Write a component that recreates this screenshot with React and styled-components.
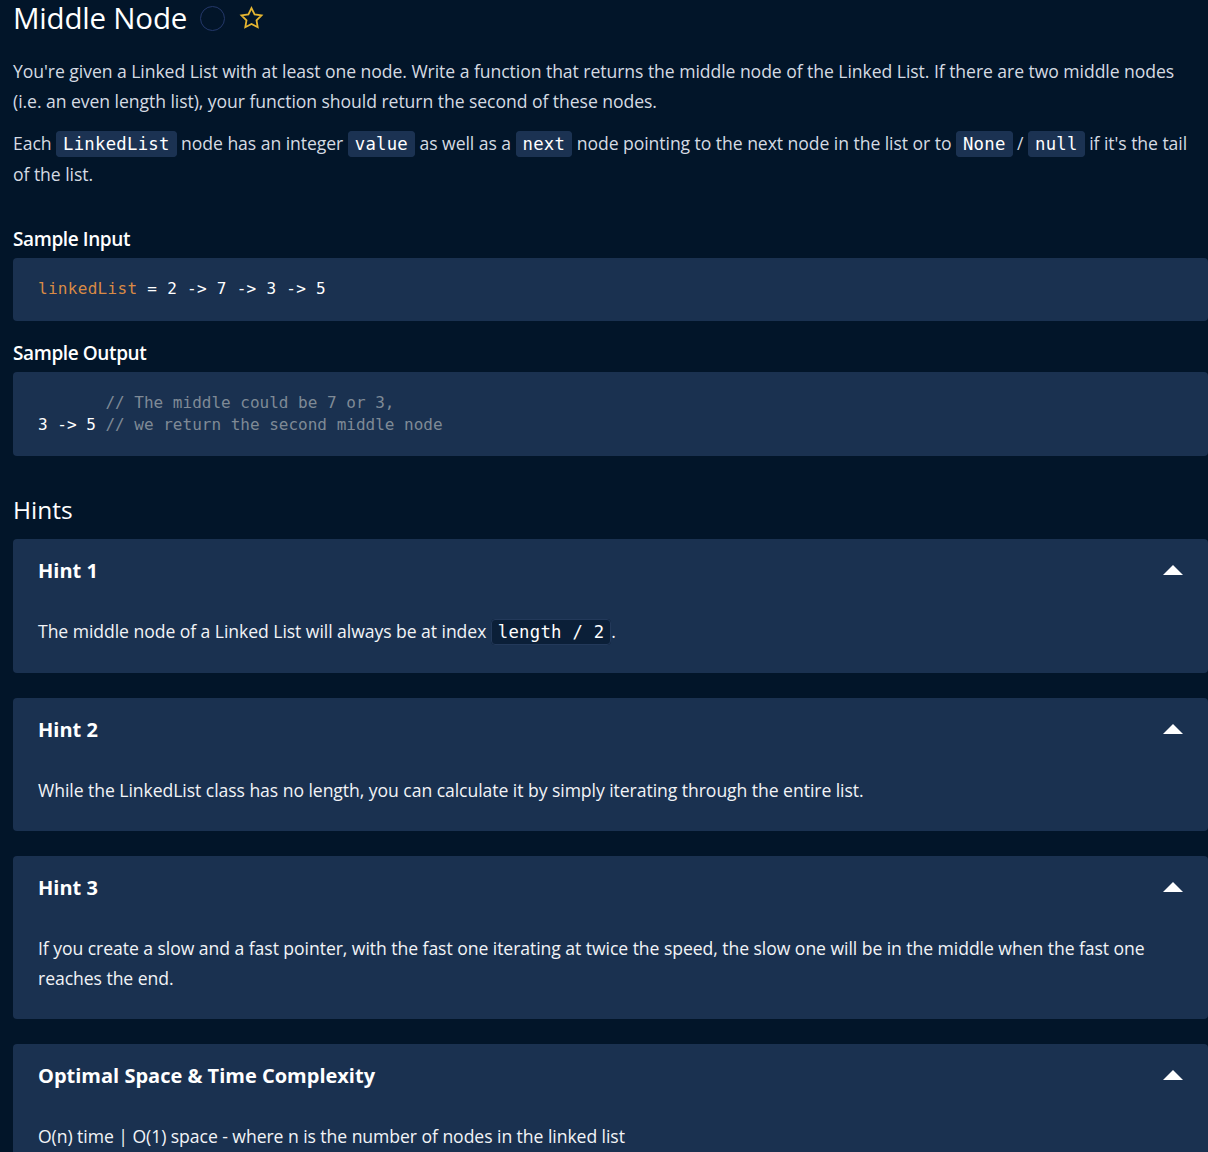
import styled, { createGlobalStyle } from "styled-components";

const GlobalStyle = createGlobalStyle`
  html, body {
    margin: 0;
    padding: 0;
    background: #021529;
  }
  body {
    font-family: "Open Sans", "Noto Sans", sans-serif;
    color: #d5dbe3;
  }
`;

const Page = styled.main`
  padding: 0 0 0 13px;
  width: 1195px;
  overflow: hidden;
`;

const TitleRow = styled.div`
  display: flex;
  align-items: center;
  gap: 13px;
  height: 36px;
`;

const Title = styled.h1`
  margin: 0;
  font-size: 29.5px;
  font-weight: 400;
  color: #ffffff;
  letter-spacing: -0.2px;
  line-height: 36px;
`;

const StatusCircle = styled.span`
  width: 25px;
  height: 25px;
  border-radius: 50%;
  border: 1.5px solid #24386a;
  box-sizing: border-box;
`;

const Paragraph = styled.p`
  margin: ${(p) => p.$top || 0}px 0 ${(p) => p.$gap || 0}px;
  font-size: 17.6px;
  line-height: 29.5px;
  letter-spacing: -0.06px;
  padding-right: 10px;
`;

const InlineCode = styled.code`
  font-family: "DejaVu Sans Mono", "Liberation Mono", monospace;
  font-size: 17.3px;
  letter-spacing: 0.25px;
  background: ${(p) => (p.$dark ? "#0b1f38" : "#1b3252")};
  color: #ffffff;
  padding: 2px 6px;
  border-radius: 4px;
  border: 1px solid ${(p) => (p.$dark ? "#23395a" : "#1b3252")};
`;

const SectionLabel = styled.h3`
  margin: 0 0 6px;
  font-size: 19px;
  font-weight: 600;
  color: #ffffff;
  line-height: 26px;
  letter-spacing: -0.4px;
`;

const CodeBlock = styled.pre`
  margin: 0 0 ${(p) => p.$gap || 0}px;
  background: #1a3150;
  border-radius: 4px;
  padding: 20px 25px ${(p) => p.$bottom || 21}px;
  font-family: "DejaVu Sans Mono", "Liberation Mono", monospace;
  font-size: 16px;
  line-height: 22px;
  letter-spacing: ${(p) => p.$spacing || 0}px;
  color: #ffffff;
`;

const Ident = styled.span`
  color: #d98a45;
`;

const Comment = styled.span`
  color: #7f8a96;
`;

const HintsHeading = styled.h2`
  margin: 0 0 14px;
  font-size: 24.5px;
  font-weight: 400;
  color: #ffffff;
  line-height: 30px;
`;

const HintList = styled.div`
  display: flex;
  flex-direction: column;
  gap: 25px;
`;

const HintCard = styled.section`
  background: #1a3150;
  border-radius: 4px;
  padding: 17px 25px 26px;
`;

const HintHeader = styled.div`
  display: flex;
  align-items: center;
  justify-content: space-between;
  height: 28px;
  margin-bottom: 32px;
`;

const HintTitle = styled.h4`
  margin: 0;
  font-size: 20px;
  font-weight: 700;
  color: #ffffff;
`;

const Caret = styled.span`
  width: 0;
  height: 0;
  border-left: 10px solid transparent;
  border-right: 10px solid transparent;
  border-bottom: 10px solid #ffffff;
`;

const HintBody = styled.p`
  margin: 0;
  font-size: 17.6px;
  line-height: 30px;
  letter-spacing: -0.06px;
  color: #f2f4f7;
`;

const StarIcon = () => (
  <svg width="27" height="27" viewBox="0 0 24 24" fill="none">
    <path
      d="M12 2.8l2.75 5.6 6.15.9-4.45 4.35 1.05 6.1L12 16.9l-5.5 2.85 1.05-6.1L3.1 9.3l6.15-.9z"
      stroke="#e6b631"
      strokeWidth="1.6"
      strokeLinejoin="miter"
    />
  </svg>
);

const hints = [
  {
    title: "Hint 1",
    body: (
      <>
        The middle node of a Linked List will always be at index{" "}
        <InlineCode $dark>length / 2</InlineCode>.
      </>
    ),
  },
  {
    title: "Hint 2",
    body: "While the LinkedList class has no length, you can calculate it by simply iterating through the entire list.",
  },
  {
    title: "Hint 3",
    body: "If you create a slow and a fast pointer, with the fast one iterating at twice the speed, the slow one will be in the middle when the fast one reaches the end.",
  },
  {
    title: "Optimal Space & Time Complexity",
    body: "O(n) time | O(1) space - where n is the number of nodes in the linked list",
  },
];

export default function App() {
  return (
    <>
      <GlobalStyle />
      <Page>
        <TitleRow>
          <Title>Middle Node</Title>
          <StatusCircle />
          <StarIcon />
        </TitleRow>

        <Paragraph $top={21} $gap={13}>
          You're given a Linked List with at least one node. Write a function that
          returns the middle node of the Linked List. If there are two middle nodes
          (i.e. an even length list), your function should return the second of
          these nodes.
        </Paragraph>
        <Paragraph $gap={37}>
          Each <InlineCode>LinkedList</InlineCode> node has an integer{" "}
          <InlineCode>value</InlineCode> as well as a <InlineCode>next</InlineCode>{" "}
          node pointing to the next node in the list or to{" "}
          <InlineCode>None</InlineCode> / <InlineCode>null</InlineCode> if it's the
          tail of the list.
        </Paragraph>

        <SectionLabel>Sample Input</SectionLabel>
        <CodeBlock $gap={19} $spacing={0.3}>
          <Ident>linkedList</Ident> = 2 -&gt; 7 -&gt; 3 -&gt; 5
        </CodeBlock>

        <SectionLabel>Sample Output</SectionLabel>
        <CodeBlock $gap={39} $bottom={20}>
          {"       "}
          <Comment>// The middle could be 7 or 3,</Comment>
          {"\n3 -> 5 "}
          <Comment>// we return the second middle node</Comment>
        </CodeBlock>

        <HintsHeading>Hints</HintsHeading>
        <HintList>
          {hints.map((h) => (
            <HintCard key={h.title}>
              <HintHeader>
                <HintTitle>{h.title}</HintTitle>
                <Caret />
              </HintHeader>
              <HintBody>{h.body}</HintBody>
            </HintCard>
          ))}
        </HintList>
      </Page>
    </>
  );
}
